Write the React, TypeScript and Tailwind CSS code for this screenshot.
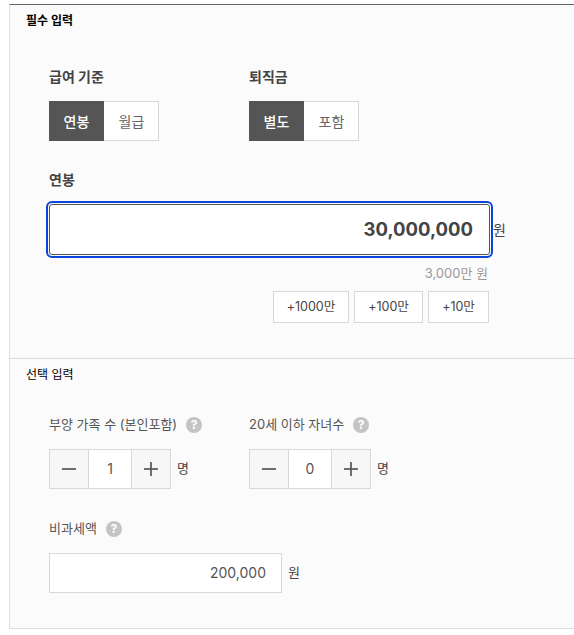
import { Minus, Plus } from "lucide-react";

const font = "[font-family:Inter,'Noto_Sans_CJK_KR',sans-serif]";

function Toggle({ on, off }: { on: string; off: string }) {
  return (
    <div className="flex h-10 w-[110px] text-[14px]">
      <div className="flex w-[55px] items-center justify-center border border-[#555] bg-[#555] font-medium text-white">
        {on}
      </div>
      <div className="flex w-[55px] items-center justify-center border border-l-0 border-[#d8d8d8] bg-white pl-px text-[#666]">
        {off}
      </div>
    </div>
  );
}

function Help() {
  return (
    <span className="flex h-4 w-4 items-center justify-center rounded-full bg-[#c4c4c4] text-[12px] leading-none font-bold text-white">
      ?
    </span>
  );
}

function Stepper({ value }: { value: string }) {
  return (
    <div className="flex items-center">
      <div className="flex h-10 w-[122px] border border-[#d8d8d8] text-[14px] text-[#555]">
        <div className="flex w-[38px] items-center justify-center bg-[#f7f7f7]">
          <Minus size={24} strokeWidth={1.7} strokeLinecap="butt" color="#555" />
        </div>
        <div className="flex w-[44px] items-center justify-center border-x border-[#d8d8d8] bg-white pb-0.5">
          {value}
        </div>
        <div className="flex w-[38px] items-center justify-center bg-[#f7f7f7]">
          <Plus size={24} strokeWidth={1.7} strokeLinecap="butt" color="#555" />
        </div>
      </div>
      <span className="ml-1.5 text-[13px] text-[#444]">명</span>
    </div>
  );
}

function AddButton({ label, width }: { label: string; width: string }) {
  return (
    <div className={`flex h-8 items-center justify-center border border-[#d8d8d8] bg-white text-[12.5px] text-[#444] ${width}`}>
      {label}
    </div>
  );
}

export default function App() {
  return (
    <div className={`h-[635px] w-[574px] overflow-hidden bg-white pt-1 pl-[9px] ${font}`}>
      <div className="h-[625px] border-t border-b border-l border-t-[#666] border-r-0 border-b-[#ddd] border-l-[#ddd] bg-[#fbfbfb]">
        <section className="h-[354px] border-b border-[#ddd] pt-[9px] pl-4">
          <h2 className="text-[12px] leading-[14px] font-bold text-black">필수 입력</h2>
          <div className="mt-[41px] ml-[23px] flex gap-[90px]">
            <div>
              <div className="text-[14px] leading-[16px] font-bold text-[#444]">급여 기준</div>
              <div className="mt-4">
                <Toggle on="연봉" off="월급" />
              </div>
            </div>
            <div>
              <div className="text-[14px] leading-[16px] font-bold text-[#444]">퇴직금</div>
              <div className="mt-4">
                <Toggle on="별도" off="포함" />
              </div>
            </div>
          </div>
          <div className="mt-[31px] ml-[23px] text-[14px] leading-[16px] font-bold text-[#444]">연봉</div>
          <div className="mt-4 ml-[23px] flex items-center">
            <div className="flex h-[51px] w-[441px] items-center justify-end rounded-[3px] border border-[#555] bg-white pr-4 text-[18.5px] font-bold text-[#444] outline-2 outline-offset-1 outline-[#0a46dc]">
              30,000,000
            </div>
            <span className="ml-[3px] text-[14px] text-[#444]">원</span>
          </div>
          <div className="mt-[9px] w-[462px] text-right text-[13px] leading-[18px] text-[#999]">3,000만 원</div>
          <div className="mt-[9px] flex w-[463px] justify-end gap-[5px]">
            <AddButton label="+1000만" width="w-[76px]" />
            <AddButton label="+100만" width="w-[69px]" />
            <AddButton label="+10만" width="w-[61px]" />
          </div>
        </section>
        <section className="pt-[9px] pl-4">
          <h2 className="text-[12px] leading-[14px] font-normal text-black">선택 입력</h2>
          <div className="mt-[35px] ml-[23px] flex">
            <div className="w-[200px]">
              <div className="flex h-4 items-center gap-[9px] text-[13px] text-[#555]">
                부양 가족 수 (본인포함) <Help />
              </div>
              <div className="mt-4">
                <Stepper value="1" />
              </div>
            </div>
            <div>
              <div className="flex h-4 items-center gap-[9px] text-[13px] text-[#555]">
                20세 이하 자녀수 <Help />
              </div>
              <div className="mt-4">
                <Stepper value="0" />
              </div>
            </div>
          </div>
          <div className="mt-8 ml-[23px] flex h-4 items-center gap-[9px] text-[13px] text-[#555]">
            비과세액 <Help />
          </div>
          <div className="mt-4 ml-[23px] flex items-center">
            <div className="flex h-10 w-[233px] items-center justify-end border border-[#d8d8d8] bg-white pr-[15px] pb-0.5 text-[14px] text-[#555]">
              200,000
            </div>
            <span className="ml-1.5 text-[13px] text-[#444]">원</span>
          </div>
        </section>
      </div>
    </div>
  );
}
